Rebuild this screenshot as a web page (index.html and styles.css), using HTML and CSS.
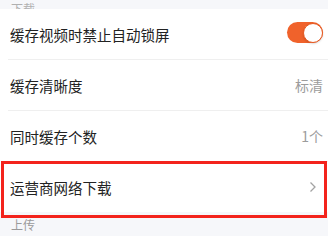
FILE: index.html
```html
<!DOCTYPE html>
<html lang="zh">
<head>
<meta charset="utf-8">
<link rel="stylesheet" href="styles.css">
</head>
<body>
<div class="page">
  <div class="section-head top"><span>下载</span></div>
  <div class="group">
    <div class="row">
      <span class="label">缓存视频时禁止自动锁屏</span>
      <span class="toggle"><span class="knob"></span></span>
    </div>
    <div class="sep"></div>
    <div class="row">
      <span class="label">缓存清晰度</span>
      <span class="value">标清</span>
    </div>
    <div class="sep"></div>
    <div class="row">
      <span class="label">同时缓存个数</span>
      <span class="value">1个</span>
    </div>
    <div class="sep"></div>
    <div class="row">
      <span class="label">运营商网络下载</span>
      <svg class="chev" width="8" height="12" viewBox="0 0 8 12"><path d="M1.5 1.5 L6 6 L1.5 10.5" fill="none" stroke="#a3a3a3" stroke-width="1.3"/></svg>
    </div>
  </div>
  <div class="section-head"><span>上传</span></div>
  <div class="group tail"></div>
  <div class="highlight"></div>
</div>
</body>
</html>
```
FILE: styles.css
```css
html, body {
  margin: 0;
  padding: 0;
}
body {
  background: #f6f7fa;
  font-family: "Noto Sans CJK SC", "Noto Sans", sans-serif;
  width: 328px;
  height: 248px;
  overflow: hidden;
}
.page {
  position: relative;
  height: 248px;
}
.section-head {
  height: 24px;
  padding-left: 11px;
  display: flex;
  align-items: center;
  font-size: 12px;
  color: #9a9a9a;
  background: #f6f7fa;
}
.section-head.top {
  height: 9px;
  overflow: hidden;
  align-items: flex-end;
}
.section-head.top span {
  line-height: 12px;
  margin-bottom: -6px;
  color: #b0b0b0;
}
.group {
  background: #ffffff;
}
.row {
  height: 50px;
  display: flex;
  align-items: center;
  justify-content: space-between;
  padding: 0 5px 0 10px;
}
.label {
  font-size: 14.5px;
  color: #222222;
}
.value {
  font-size: 14px;
  color: #9c9c9c;
}
.sep {
  height: 1px;
  margin-left: 8px;
  background: #efefef;
}
.toggle {
  width: 36px;
  height: 21px;
  border-radius: 11px;
  background: #f0622b;
  display: flex;
  align-items: center;
  justify-content: flex-end;
  margin-top: -3px;
}
.knob {
  width: 18px;
  height: 18px;
  border-radius: 50%;
  background: #ffffff;
  border: 1px solid #e8581f;
  box-shadow: 0 1px 2px rgba(0,0,0,0.15);
}
.chev {
  margin-right: 6px;
}
.tail {
  height: 20px;
}
.highlight {
  position: absolute;
  left: 1px;
  right: 1px;
  top: 161px;
  height: 51px;
  border: 3px solid #f3231c;
}
```
